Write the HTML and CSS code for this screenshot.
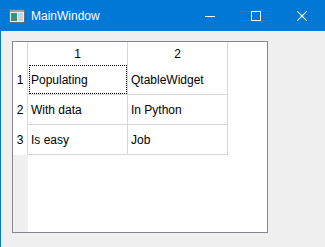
FILE: index.html
```html
<!DOCTYPE html>
<html lang="en">
<head>
    <meta charset="UTF-8">
    <title>MainWindow</title>
    <link rel="stylesheet" href="styles.css">
</head>
<body>
    <div class="window">
        <div class="titlebar">
            <svg class="app-icon" width="16" height="14" viewBox="0 0 16 14">
                <rect x="0.5" y="0.5" width="15" height="13" fill="#e8eef2" stroke="#5b6f7d"/>
                <rect x="1" y="1" width="14" height="2" fill="#8fa6b6"/>
                <rect x="2" y="4" width="6" height="8" fill="#3e8e7a"/>
                <rect x="9" y="4" width="5" height="8" fill="#c9d3da"/>
            </svg>
            <span class="title">MainWindow</span>
            <div class="caption-buttons">
                <div class="caption-btn">
                    <svg width="10" height="10" viewBox="0 0 10 10"><line x1="0" y1="5.5" x2="10" y2="5.5" stroke="#fff"/></svg>
                </div>
                <div class="caption-btn">
                    <svg width="10" height="10" viewBox="0 0 10 10"><rect x="0.5" y="0.5" width="9" height="9" fill="none" stroke="#fff"/></svg>
                </div>
                <div class="caption-btn">
                    <svg width="10" height="10" viewBox="0 0 10 10"><path d="M0 0 L10 10 M10 0 L0 10" stroke="#fff" stroke-width="1.1"/></svg>
                </div>
            </div>
        </div>
        <div class="content">
            <div class="table-widget">
                <div class="vheader">
                    <div class="vcell corner"></div>
                    <div class="vcell">1</div>
                    <div class="vcell">2</div>
                    <div class="vcell">3</div>
                </div>
                <div class="grid">
                    <div class="hcell">1</div>
                    <div class="hcell">2</div>
                    <div class="cell focused">Populating</div>
                    <div class="cell">QtableWidget</div>
                    <div class="cell">With data</div>
                    <div class="cell">In Python</div>
                    <div class="cell">Is easy</div>
                    <div class="cell">Job</div>
                </div>
            </div>
        </div>
    </div>
</body>
</html>
```

FILE: styles.css
```css
body {
    margin: 0;
    font-family: 'Liberation Sans', Arial, sans-serif;
    font-size: 12px;
    color: #000;
    background-color: #f0f0f0;
    overflow: hidden;
}
.window {
    height: 100vh;
    display: flex;
    flex-direction: column;
    border-left: 1px solid #0078d7;
    box-sizing: border-box;
}
.titlebar {
    height: 31px;
    margin-left: -1px;
    background-color: #0078d7;
    color: #fff;
    display: flex;
    align-items: center;
    flex-shrink: 0;
}
.app-icon {
    margin-left: 9px;
    margin-right: 6px;
}
.title {
    flex: 1;
    font-size: 12px;
}
.caption-buttons {
    display: flex;
    height: 100%;
}
.caption-btn {
    width: 46px;
    height: 100%;
    display: flex;
    align-items: center;
    justify-content: center;
}
.content {
    flex: 1;
    padding: 10px 0 0 11px;
}
.table-widget {
    width: 256px;
    height: 192px;
    box-sizing: border-box;
    border: 1px solid #828790;
    background-color: #fff;
    display: flex;
}
.vheader {
    width: 15px;
    background-color: #f0f0f0;
    display: flex;
    flex-direction: column;
}
.vcell {
    height: 30px;
    box-sizing: border-box;
    background-color: #fff;
    border-right: 1px solid #d8d8d8;
    display: flex;
    align-items: center;
    justify-content: center;
}
.vcell.corner {
    height: 23px;
}
.grid {
    display: grid;
    grid-template-columns: 100px 100px;
    grid-template-rows: 23px 30px 30px 30px;
    align-content: start;
}
.hcell {
    display: flex;
    align-items: center;
    justify-content: center;
    border-right: 1px solid #d8d8d8;
}
.cell {
    position: relative;
    box-sizing: border-box;
    border-right: 1px solid #d8d8d8;
    border-bottom: 1px solid #d8d8d8;
    padding-left: 3px;
    display: flex;
    align-items: center;
}
.cell.focused::after {
    content: '';
    position: absolute;
    top: 0;
    left: 1px;
    right: 0;
    bottom: 0;
    border: 1px dotted #000;
}
```
